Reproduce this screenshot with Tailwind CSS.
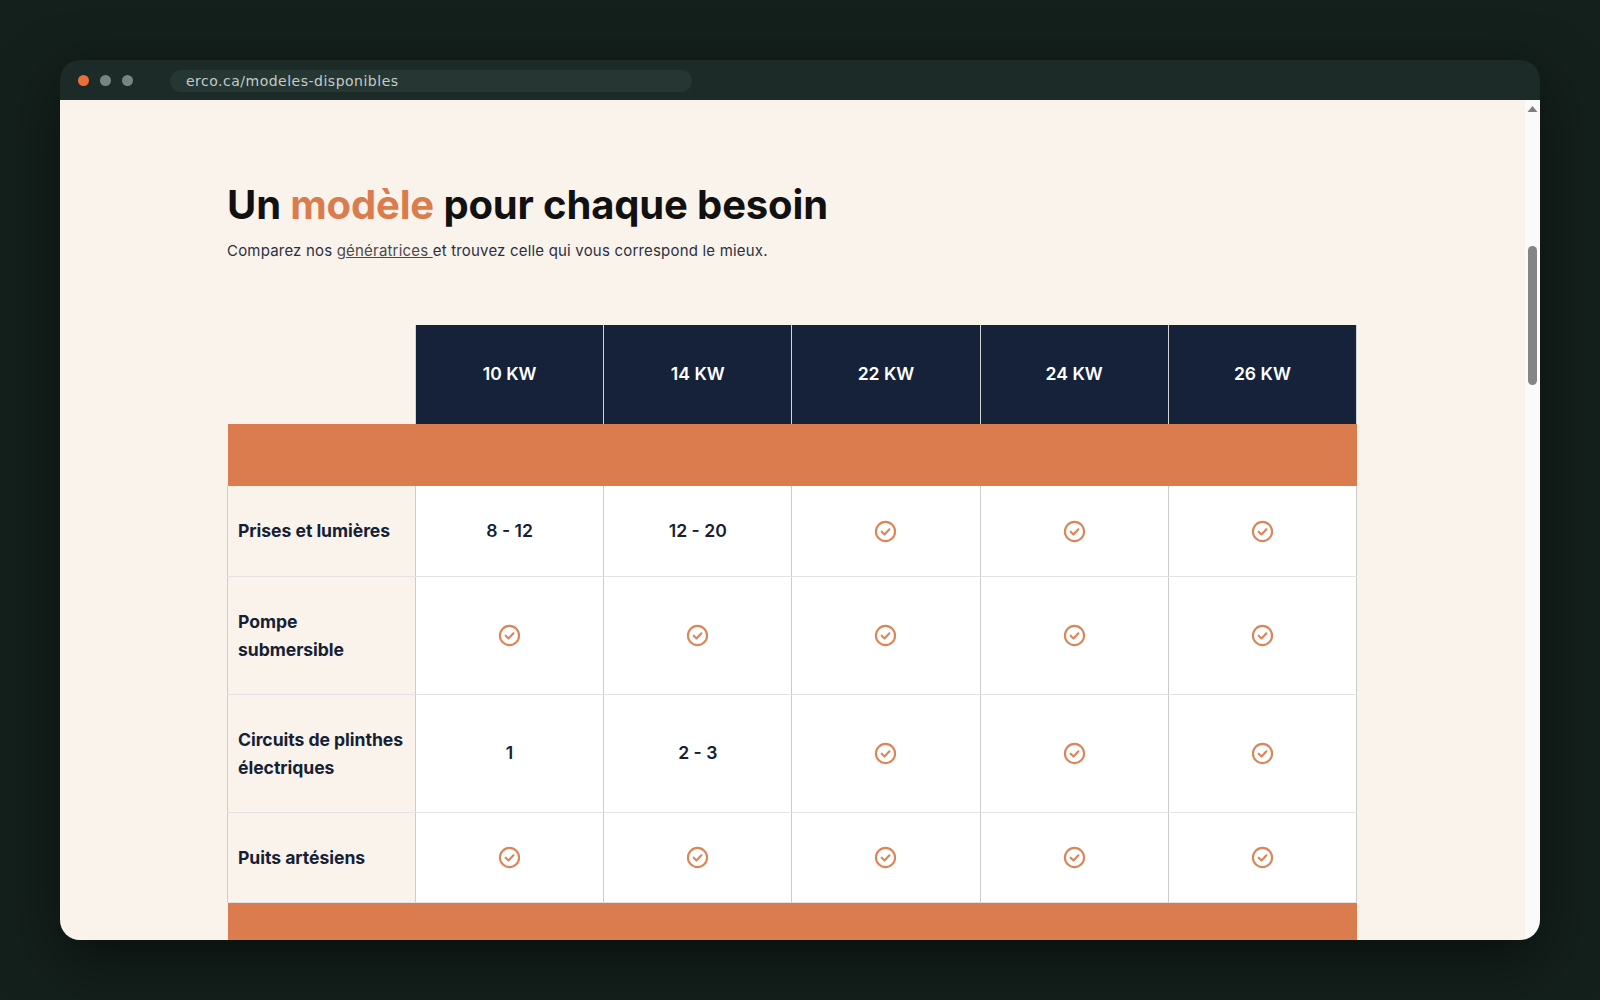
<!DOCTYPE html>
<html lang="fr"><head><meta charset="utf-8">
<script src="https://cdn.jsdelivr.net/npm/@tailwindcss/browser@4"></script>
</head>
<body class="m-0 h-[1000px] w-[1600px] overflow-hidden bg-[#14201c] font-['Inter',sans-serif]">
<div class="p-[60px] h-full">
<div class="flex h-[880px] w-[1480px] flex-col overflow-hidden rounded-[20px] shadow-[0_20px_60px_rgba(0,0,0,0.5)]">
  <div class="flex h-10 shrink-0 items-center bg-[#1c2b27] pl-[18px]">
    <div class="flex gap-[11px]">
      <span class="size-[11px] rounded-full bg-[#e8703a]"></span>
      <span class="size-[11px] rounded-full bg-[#75867f]"></span>
      <span class="size-[11px] rounded-full bg-[#75867f]"></span>
    </div>
    <div class="ml-[37px] mt-px flex h-[22px] w-[522px] items-center rounded-full bg-[#263632] pl-4 pt-px font-['DejaVu_Sans',sans-serif] text-[14px] tracking-[0.5px] text-[#c4ccc9]">erco.ca/modeles-disponibles</div>
  </div>
  <div class="flex min-h-0 flex-1">
    <main class="flex-1 overflow-hidden bg-[#faf3ec] pl-[167px] pt-[83px]">
      <div class="w-[1130px]">
        <h2 class="text-[40px] font-bold leading-[44px] tracking-[-0.15px] text-[#111111] [font-variation-settings:'opsz'_32]">Un <span class="text-[#da7c4e]">modèle</span> pour chaque besoin</h2>
        <p class="mt-3 text-[15px] leading-[24px] tracking-[0.19px] text-[#2a3040]">Comparez nos <a class="text-[#4a4a4a] underline">génératrices </a>et trouvez celle qui vous correspond le mieux.</p>
        <table class="mt-[62px] w-[1130px] table-fixed border-collapse text-[#161f36]">
          <thead>
            <tr class="h-[99px] text-[17.6px] font-semibold text-white">
              <th class="w-[188px]"></th>
              <th class="border-x border-[#d4d4d4] bg-[#16213a] font-semibold">10 KW</th>
              <th class="border-x border-[#d4d4d4] bg-[#16213a] font-semibold">14 KW</th>
              <th class="border-x border-[#d4d4d4] bg-[#16213a] font-semibold">22 KW</th>
              <th class="border-x border-[#d4d4d4] bg-[#16213a] font-semibold">24 KW</th>
              <th class="border-x border-[#d4d4d4] bg-[#16213a] font-semibold">26 KW</th>
            </tr>
          </thead>
          <tbody class="text-center text-[17.6px] font-semibold [&_td]:pt-px">
            <tr class="h-[62px]"><td colspan="6" class="bg-[#da7c4e]"></td></tr>
            <tr class="h-[90px]">
              <td class="border-x border-b border-x-[#cccccc] border-b-[#e2e2e2] bg-[#faf3ec] px-2.5 text-left font-bold leading-[28px] tracking-[-0.05px]">Prises et lumières</td>
              <td class="border-x border-b border-x-[#cccccc] border-b-[#e2e2e2] bg-white">8 - 12</td>
              <td class="border-x border-b border-x-[#cccccc] border-b-[#e2e2e2] bg-white">12 - 20</td>
              <td class="border-x border-b border-x-[#cccccc] border-b-[#e2e2e2] bg-white"><svg class="mx-auto" width="23" height="23" viewBox="0 0 24 24" fill="none" stroke="#dd8458" stroke-width="2.2" stroke-linecap="round" stroke-linejoin="round"><circle cx="12" cy="12" r="10"/><path d="m8 12.2 2.9 2.9 5.2-5.4"/></svg></td>
              <td class="border-x border-b border-x-[#cccccc] border-b-[#e2e2e2] bg-white"><svg class="mx-auto" width="23" height="23" viewBox="0 0 24 24" fill="none" stroke="#dd8458" stroke-width="2.2" stroke-linecap="round" stroke-linejoin="round"><circle cx="12" cy="12" r="10"/><path d="m8 12.2 2.9 2.9 5.2-5.4"/></svg></td>
              <td class="border-x border-b border-x-[#cccccc] border-b-[#e2e2e2] bg-white"><svg class="mx-auto" width="23" height="23" viewBox="0 0 24 24" fill="none" stroke="#dd8458" stroke-width="2.2" stroke-linecap="round" stroke-linejoin="round"><circle cx="12" cy="12" r="10"/><path d="m8 12.2 2.9 2.9 5.2-5.4"/></svg></td>
            </tr>
            <tr class="h-[118px]">
              <td class="border-x border-b border-x-[#cccccc] border-b-[#e2e2e2] bg-[#faf3ec] px-2.5 text-left font-bold leading-[28px] tracking-[-0.05px]">Pompe<br>submersible</td>
              <td class="border-x border-b border-x-[#cccccc] border-b-[#e2e2e2] bg-white"><svg class="mx-auto" width="23" height="23" viewBox="0 0 24 24" fill="none" stroke="#dd8458" stroke-width="2.2" stroke-linecap="round" stroke-linejoin="round"><circle cx="12" cy="12" r="10"/><path d="m8 12.2 2.9 2.9 5.2-5.4"/></svg></td>
              <td class="border-x border-b border-x-[#cccccc] border-b-[#e2e2e2] bg-white"><svg class="mx-auto" width="23" height="23" viewBox="0 0 24 24" fill="none" stroke="#dd8458" stroke-width="2.2" stroke-linecap="round" stroke-linejoin="round"><circle cx="12" cy="12" r="10"/><path d="m8 12.2 2.9 2.9 5.2-5.4"/></svg></td>
              <td class="border-x border-b border-x-[#cccccc] border-b-[#e2e2e2] bg-white"><svg class="mx-auto" width="23" height="23" viewBox="0 0 24 24" fill="none" stroke="#dd8458" stroke-width="2.2" stroke-linecap="round" stroke-linejoin="round"><circle cx="12" cy="12" r="10"/><path d="m8 12.2 2.9 2.9 5.2-5.4"/></svg></td>
              <td class="border-x border-b border-x-[#cccccc] border-b-[#e2e2e2] bg-white"><svg class="mx-auto" width="23" height="23" viewBox="0 0 24 24" fill="none" stroke="#dd8458" stroke-width="2.2" stroke-linecap="round" stroke-linejoin="round"><circle cx="12" cy="12" r="10"/><path d="m8 12.2 2.9 2.9 5.2-5.4"/></svg></td>
              <td class="border-x border-b border-x-[#cccccc] border-b-[#e2e2e2] bg-white"><svg class="mx-auto" width="23" height="23" viewBox="0 0 24 24" fill="none" stroke="#dd8458" stroke-width="2.2" stroke-linecap="round" stroke-linejoin="round"><circle cx="12" cy="12" r="10"/><path d="m8 12.2 2.9 2.9 5.2-5.4"/></svg></td>
            </tr>
            <tr class="h-[118px]">
              <td class="border-x border-b border-x-[#cccccc] border-b-[#e2e2e2] bg-[#faf3ec] px-2.5 text-left font-bold leading-[28px] tracking-[-0.05px]">Circuits de plinthes<br>électriques</td>
              <td class="border-x border-b border-x-[#cccccc] border-b-[#e2e2e2] bg-white">1</td>
              <td class="border-x border-b border-x-[#cccccc] border-b-[#e2e2e2] bg-white">2 - 3</td>
              <td class="border-x border-b border-x-[#cccccc] border-b-[#e2e2e2] bg-white"><svg class="mx-auto" width="23" height="23" viewBox="0 0 24 24" fill="none" stroke="#dd8458" stroke-width="2.2" stroke-linecap="round" stroke-linejoin="round"><circle cx="12" cy="12" r="10"/><path d="m8 12.2 2.9 2.9 5.2-5.4"/></svg></td>
              <td class="border-x border-b border-x-[#cccccc] border-b-[#e2e2e2] bg-white"><svg class="mx-auto" width="23" height="23" viewBox="0 0 24 24" fill="none" stroke="#dd8458" stroke-width="2.2" stroke-linecap="round" stroke-linejoin="round"><circle cx="12" cy="12" r="10"/><path d="m8 12.2 2.9 2.9 5.2-5.4"/></svg></td>
              <td class="border-x border-b border-x-[#cccccc] border-b-[#e2e2e2] bg-white"><svg class="mx-auto" width="23" height="23" viewBox="0 0 24 24" fill="none" stroke="#dd8458" stroke-width="2.2" stroke-linecap="round" stroke-linejoin="round"><circle cx="12" cy="12" r="10"/><path d="m8 12.2 2.9 2.9 5.2-5.4"/></svg></td>
            </tr>
            <tr class="h-[90px]">
              <td class="border-x border-b border-x-[#cccccc] border-b-[#e2e2e2] bg-[#faf3ec] px-2.5 text-left font-bold leading-[28px] tracking-[-0.05px]">Puits artésiens</td>
              <td class="border-x border-b border-x-[#cccccc] border-b-[#e2e2e2] bg-white"><svg class="mx-auto" width="23" height="23" viewBox="0 0 24 24" fill="none" stroke="#dd8458" stroke-width="2.2" stroke-linecap="round" stroke-linejoin="round"><circle cx="12" cy="12" r="10"/><path d="m8 12.2 2.9 2.9 5.2-5.4"/></svg></td>
              <td class="border-x border-b border-x-[#cccccc] border-b-[#e2e2e2] bg-white"><svg class="mx-auto" width="23" height="23" viewBox="0 0 24 24" fill="none" stroke="#dd8458" stroke-width="2.2" stroke-linecap="round" stroke-linejoin="round"><circle cx="12" cy="12" r="10"/><path d="m8 12.2 2.9 2.9 5.2-5.4"/></svg></td>
              <td class="border-x border-b border-x-[#cccccc] border-b-[#e2e2e2] bg-white"><svg class="mx-auto" width="23" height="23" viewBox="0 0 24 24" fill="none" stroke="#dd8458" stroke-width="2.2" stroke-linecap="round" stroke-linejoin="round"><circle cx="12" cy="12" r="10"/><path d="m8 12.2 2.9 2.9 5.2-5.4"/></svg></td>
              <td class="border-x border-b border-x-[#cccccc] border-b-[#e2e2e2] bg-white"><svg class="mx-auto" width="23" height="23" viewBox="0 0 24 24" fill="none" stroke="#dd8458" stroke-width="2.2" stroke-linecap="round" stroke-linejoin="round"><circle cx="12" cy="12" r="10"/><path d="m8 12.2 2.9 2.9 5.2-5.4"/></svg></td>
              <td class="border-x border-b border-x-[#cccccc] border-b-[#e2e2e2] bg-white"><svg class="mx-auto" width="23" height="23" viewBox="0 0 24 24" fill="none" stroke="#dd8458" stroke-width="2.2" stroke-linecap="round" stroke-linejoin="round"><circle cx="12" cy="12" r="10"/><path d="m8 12.2 2.9 2.9 5.2-5.4"/></svg></td>
            </tr>
            <tr class="h-[62px]"><td colspan="6" class="bg-[#da7c4e]"></td></tr>
          </tbody>
        </table>
      </div>
    </main>
    <div class="relative w-[15px] shrink-0 bg-[#fafafa]">
      <svg class="mx-auto mt-[6px]" width="11" height="6" viewBox="0 0 11 6"><path d="M5.5 0 10.5 6H.5z" fill="#7f7f7f"/></svg>
      <div class="absolute left-[3px] top-[146px] h-[139px] w-[9px] rounded-[5px] bg-[#858585]"></div>
    </div>
  </div>
</div>
</div>
</body></html>
